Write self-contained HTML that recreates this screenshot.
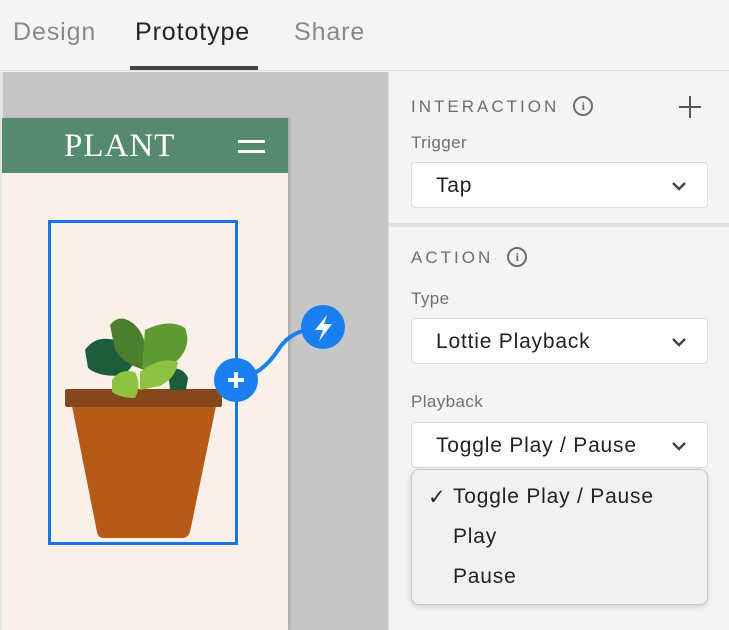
<!DOCTYPE html><html><head><style>
*{margin:0;padding:0;box-sizing:border-box}
body{width:729px;height:630px;position:relative;overflow:hidden;background:#f4f4f4;font-family:"Liberation Sans",sans-serif}
.tab{position:absolute;top:18px;font-size:25px;color:#8a8a8a;letter-spacing:0.9px}
.lab{position:absolute;left:411px;font-size:17px;color:#707070;letter-spacing:0.4px}
.hdr{position:absolute;left:411px;font-size:17px;letter-spacing:3px;color:#6e6e6e}
.sel{position:absolute;left:411px;width:297px;height:46px;background:#fff;border:1px solid #ddd;border-radius:4px;font-size:21px;color:#222;padding:11px 0 0 24px;letter-spacing:0.8px}
.sel svg{position:absolute;right:20px;top:18px}
.info{display:inline-block;width:20px;height:20px;border:2px solid #6e6e6e;border-radius:50%;font-size:12px;text-align:center;line-height:16px;letter-spacing:0;font-family:"Liberation Serif",serif;font-weight:bold;vertical-align:2px;margin-left:14px}
</style></head><body>
<div style="position:absolute;left:0;top:0;width:729px;height:71px;background:#f4f4f4;border-bottom:1px solid #ddd"></div>
<div class="tab" style="left:13px">Design</div>
<div class="tab" style="left:135px;color:#222">Prototype</div>
<div class="tab" style="left:294px">Share</div>
<div style="position:absolute;left:130px;top:66px;width:128px;height:4px;background:#444"></div>
<div style="position:absolute;left:0;top:72px;width:388px;height:558px;background:#c6c6c6"></div>
<div style="position:absolute;left:0;top:72px;width:3px;height:558px;background:#e4e4e4"></div>
<div style="position:absolute;left:2px;top:118px;width:286px;height:512px;background:#f9f0e8;box-shadow:2px 0 3px rgba(0,0,0,.15)"></div>
<div style="position:absolute;left:2px;top:118px;width:286px;height:55px;background:#558a6d"></div>
<div style="position:absolute;left:64px;top:128px;font-family:'Liberation Serif',serif;font-size:33px;color:#fff;letter-spacing:1px">PLANT</div>
<div style="position:absolute;left:238px;top:140px;width:27px;height:3px;background:#fff"></div>
<div style="position:absolute;left:238px;top:150px;width:27px;height:3px;background:#fff"></div>
<svg style="position:absolute;left:0;top:0" width="388" height="630">
<path d="M72 406 L216 406 L190 532 Q188 538 182 538 L104 538 Q98 538 97 532 Z" fill="#b65a17"/>
<rect x="65" y="389" width="157" height="18" rx="2" fill="#86461c"/>
<path d="M85 350 Q95 335 115 340 Q128 345 135 362 L125 375 Q100 378 88 368 Z" fill="#1d5e3a"/>
<path d="M110 325 Q120 312 135 325 Q150 340 145 370 Q125 365 115 350 Z" fill="#4b7f2e"/>
<path d="M145 330 Q170 318 185 328 Q192 345 178 360 Q160 372 142 368 Z" fill="#5f9a32"/>
<path d="M168 370 Q182 365 188 378 L186 390 L170 390 Z" fill="#1d5e3a"/>
<path d="M112 380 Q120 368 135 372 Q142 385 135 398 Q120 398 112 392 Z" fill="#8fc241"/>
<path d="M140 372 Q160 356 178 362 Q176 378 160 386 L140 390 Z" fill="#8fc241"/>
<rect x="49.5" y="221.5" width="187" height="322" fill="none" stroke="#1a73e8" stroke-width="3"/>
<path d="M236 380 Q262 375 278 350 Q292 328 322 328" fill="none" stroke="#1a80f0" stroke-width="4"/>
<circle cx="236" cy="380" r="22" fill="#1a80f0"/>
<path d="M228 380h16M236 372v16" stroke="#fff" stroke-width="4"/>
<circle cx="323" cy="327" r="22" fill="#1a80f0"/>
<path d="M327 315 L315 330 L323 330 L319 341 L332 324 L324 324 Z" fill="#fff"/>
</svg>
<div style="position:absolute;left:388px;top:72px;width:341px;height:558px;background:#f4f4f4;border-left:1px solid #ddd"></div>
<div style="position:absolute;left:388px;top:223px;width:341px;height:4px;background:#e2e2e2"></div>
<div class="hdr" style="top:96px">INTERACTION<span class="info">i</span></div>
<div style="position:absolute;left:679px;top:106px;width:22px;height:2px;background:#555"></div>
<div style="position:absolute;left:689px;top:96px;width:2px;height:22px;background:#555"></div>
<div class="lab" style="top:133px">Trigger</div>
<div class="sel" style="top:162px">Tap<svg width="16" height="10"><path d="M2 2l6 6 6-6" fill="none" stroke="#444" stroke-width="2.5"/></svg></div>
<div class="hdr" style="top:247px">ACTION<span class="info">i</span></div>
<div class="lab" style="top:289px">Type</div>
<div class="sel" style="top:318px">Lottie Playback<svg width="16" height="10"><path d="M2 2l6 6 6-6" fill="none" stroke="#444" stroke-width="2.5"/></svg></div>
<div class="lab" style="top:392px">Playback</div>
<div class="sel" style="top:422px">Toggle Play / Pause<svg width="16" height="10"><path d="M2 2l6 6 6-6" fill="none" stroke="#444" stroke-width="2.5"/></svg></div>
<div style="position:absolute;left:411px;top:469px;width:297px;height:136px;background:#f1f1f1;border:1px solid #c8c8c8;border-radius:8px;box-shadow:0 2px 6px rgba(0,0,0,.15);font-size:21px;color:#222;letter-spacing:0.8px">
<div style="position:absolute;left:16px;top:15px">✓</div>
<div style="position:absolute;left:41px;top:15px">Toggle Play / Pause</div>
<div style="position:absolute;left:41px;top:55px">Play</div>
<div style="position:absolute;left:41px;top:95px">Pause</div>
</div>
</body></html>
